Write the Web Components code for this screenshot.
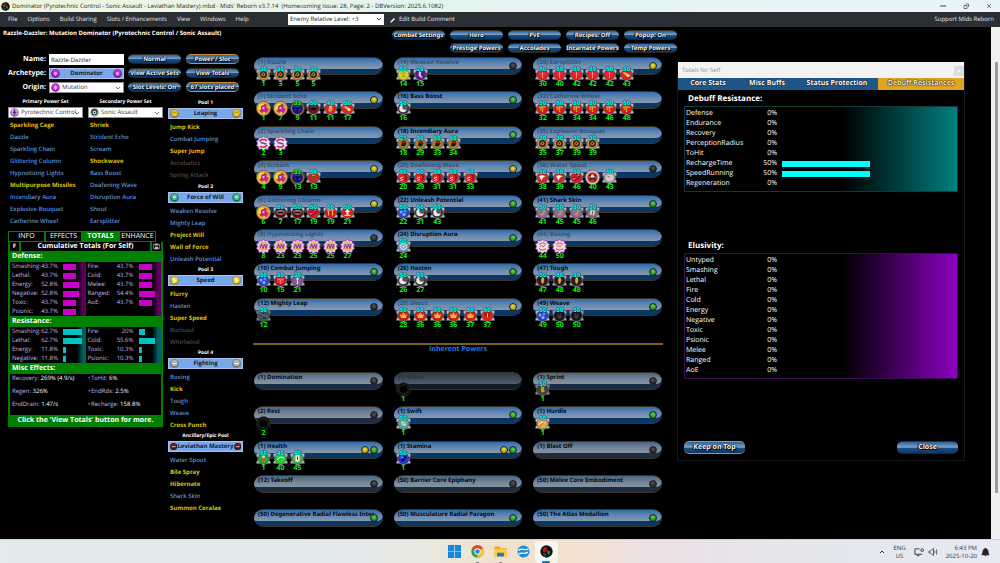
<!DOCTYPE html>
<html lang="en">
<head>
<meta charset="utf-8">
<title>Mids' Reborn</title>
<style>
html,body{margin:0;height:100%;background:#000}
body{font-family:"Open Sans","Noto Sans",sans-serif;font-size:6px;line-height:12px;color:#fff;text-rendering:geometricPrecision}
</style>
</head>
<body>
<mids-app></mids-app>
<script>
const RESET = `*{box-sizing:border-box}
button,input,select{font:inherit;color:inherit;text-rendering:inherit;margin:0;padding:0;border:0;background:none;border-radius:0;text-align:inherit}
ul{list-style:none;margin:0;padding:0}svg{display:block}`;

const define = (name, css, html) => customElements.define(name, class extends HTMLElement {
  connectedCallback() {
    if (this.shadowRoot) return;
    this.attachShadow({ mode: 'open' }).innerHTML = `<style>${RESET}${css}</style>${html(this)}`;
  }
});

/* ---------- enhancement icons ---------- */
const shield = (fill, glyph, rim = '#b8bcc6') => `
  <path d="M1 5h4l3-2h14l3 2h4v6l-2 1v8l2 1v4h-5l-4 1-5 3-5-3-4-1H1v-4l2-1v-8l-2-1z" fill="${rim}" stroke="#4a4c58" stroke-width="1"/>
  <circle cx="15" cy="15" r="11" fill="${fill}" stroke="#3a3238" stroke-width="1"/>${glyph}`;
const ringed = (fill, rim, glyph) => `<circle cx="15" cy="15" r="14.5" fill="${rim}" stroke="#4b3010"/><circle cx="15" cy="15" r="12" fill="none" stroke="#f0dcae" stroke-opacity=".5"/><circle cx="15" cy="15" r="10.5" fill="${fill}"/>${glyph}`;
const wavy = (fill, glyph) => `<path d="M15 1l4 3 5-1 1 5 4 3-2 4 2 4-4 3-1 5-5-1-4 3-4-3-5 1-1-5-4-3 2-4-2-4 4-3 1-5 5 1z" fill="#e9d9f2" stroke="#9a2fb0" stroke-width="1.5"/><circle cx="15" cy="15" r="10" fill="${fill}"/>${glyph}`;
const ICONS = {
  eye: shield('#c9913c', '<circle cx="15" cy="15" r="7" fill="#2c2415"/><path d="M12 18c-1-5 3-8 5-5s-1 6-3 4" fill="none" stroke="#d9b058" stroke-width="2"/>'),
  duo: ringed('#f0e62c', '#c99a4c', '<path d="M15 5a10 10 0 0 1 9 6l-6 1z" fill="#e23a2a"/><path d="M18 12l7 2a10 10 0 0 1-7 11z" fill="#e01fa0"/><path d="M6 18l6-1 2 8a10 10 0 0 1-8-7z" fill="#e23a2a"/><ellipse cx="15" cy="15" rx="4.5" ry="6.5" fill="#d52bb4" stroke="#6b2a62" stroke-width="1.5"/><circle cx="15" cy="14" r="2" fill="#f3b6e8"/>'),
  navy: ringed('#10127c', '#6b5334', '<path d="M9 10h4l2 3 3-3h3M10 19l3-3h5l2 4" fill="none" stroke="#3f50d8" stroke-width="2"/><circle cx="15" cy="15" r="3" fill="#04052c"/>'),
  maroon: shield('#6a1424', '<path d="M8 14c4-4 10-4 14 0-3 6-11 6-14 0z" fill="#180409"/><path d="M9 13c4-2 8-2 12 0" stroke="#d07a86" fill="none"/>'),
  flame: shield('#e0221c', '<path d="M11 21c-1-6 1-9 5-12 2 4 4 3 3 8l-3 4z" fill="#d9a441"/><path d="M12 12l6-2" stroke="#f5dca4" stroke-width="2"/>'),
  comet: shield('#e02418', '<path d="M7 9l8 3 7 6-5 1-6-4z" fill="#e8b25a"/><circle cx="18" cy="17" r="3" fill="#f4e3c0"/>'),
  swirl: wavy('#f4e6ee', '<path d="M7 11c4-5 11-5 15-1M22 18c-3 5-10 6-14 2" stroke="#d2202c" stroke-width="3" fill="none"/><path d="M9 14c5-2 7 3 12 1" stroke="#3b58c8" stroke-width="3" fill="none"/>'),
  fist: shield('#d82020', '<path d="M12 21v-6l-2-3 3-4 5 1 2 5-3 7z" fill="#8a3f22"/><path d="M12 10l5 1" stroke="#e8b98c" stroke-width="2"/>'),
  lips: shield('#4a1016', '<path d="M6 14c4-6 14-6 18 0-4 8-14 8-18 0z" fill="#c0656c"/><path d="M9 15h12" stroke="#1a0306" stroke-width="3"/>'),
  slash: shield('#d41a22', '<path d="M8 19L21 10" stroke="#f2b4ae" stroke-width="2"/><path d="M8 16l14-4M9 21l12-5" stroke="#7c0a10" stroke-width="2"/>'),
  bars: shield('#e01c12', '<path d="M8 10h14" stroke="#f4e0c8" stroke-width="2"/><path d="M11 12v9M19 12v9" stroke="#f2b078" stroke-width="2"/>'),
  up: shield('#e02512', '<path d="M15 7l5 7h-3v7h-4v-7h-3z" fill="#f8eee0"/><path d="M9 21h12" stroke="#f4d8b8" stroke-width="2"/>'),
  weave: wavy('#e2b478', '<path d="M8 19l3-9 3 9 3-9 3 9 2-9" fill="none" stroke="#8a2f9c" stroke-width="2"/>'),
  dots: shield('#2446c8', '<circle cx="10" cy="14" r="3" fill="#7fa4ff"/><circle cx="18" cy="12" r="3" fill="#5f86f4"/><circle cx="16" cy="19" r="3" fill="#8fb0ff"/>'),
  cube: shield('#b9101c', '<path d="M8 11l7-3 7 3v8l-7 3-7-3z" fill="#f03034"/><path d="M8 11l7 3 7-3M15 14v8" stroke="#ffb0b0" fill="none"/>'),
  man: shield('#7f5a96', '<path d="M15 7v14M12 12h6M13 21h4" stroke="#e9d8c0" stroke-width="2"/>', '#b6a6bc'),
  steel: shield('#45545c', '<path d="M10 10h10v11H10z" fill="#1f2c30"/><path d="M9 11l12 7M10 20l10-9" stroke="#8fa6a8" stroke-width="1.5"/>', '#6d7b80'),
  gold: shield('#d8d22a', '<path d="M15 8v14M9 12h12M10 18h10" stroke="#a49c14" stroke-width="1.5"/>'),
  plum: shield('#5a1f82', '<path d="M12 8l4 2v7l4 4h-5l-4-4z" fill="#e8b8d8"/>'),
  moon: shield('#303036', '<circle cx="14" cy="15" r="7.5" fill="#e8e8e4"/><circle cx="18" cy="12" r="5.5" fill="#55555c"/>'),
  ember: shield('#9c8228', '<path d="M10 20l2-9 6-2 3 6-4 6z" fill="#201018"/><path d="M11 11l8 3" stroke="#9a301c" stroke-width="3"/>'),
  wave: shield('#e02428', '<path d="M16 8c5 2 6 8 2 13" fill="none" stroke="#8c0c12" stroke-width="3"/><path d="M8 17l6-3M9 21l5-2" stroke="#ffe8e0" stroke-width="2"/>'),
  spiral: shield('#7f9cc0', '<circle cx="15" cy="15" r="6" fill="none" stroke="#e8f2fb" stroke-width="2"/><circle cx="15" cy="15" r="2" fill="#dce8f4"/>'),
  crown: shield('#d31a18', '<path d="M8 12l4 2 3-6 3 6 4-2-2 8H10z" fill="#e6b83c"/>'),
  heart: shield('#e82018', '<path d="M15 10c3-3 7 0 5 5l-5 7-5-7c-2-5 2-8 5-5z" fill="#b01410"/><path d="M15 11v8" stroke="#f4d8c8" stroke-width="2"/>'),
  bolt: shield('#e42022', '<path d="M15 9v13" stroke="#ffb0aa" stroke-width="1.5"/><path d="M10 14h10" stroke="#f07470"/>'),
  tee: shield('#dc1a10', '<path d="M8 12h14M15 9v13M11 14v4" stroke="#c79a32" stroke-width="3"/>'),
  spout: shield('#d42a24', '<path d="M8 12l7-2 6 3-5 2-3 6z" fill="#f7f3ee"/><path d="M17 10l4 3" stroke="#5aa35f" stroke-width="2"/>'),
  orb: ringed('#b8322e', '#d4c4c0', '<circle cx="15" cy="13" r="4" fill="#e8e6e4"/><path d="M9 20c3-5 9-5 12 0M9 10l3 2M21 10l-3 2" stroke="#1c1618" stroke-width="2.5" fill="none"/>'),
  pearl: shield('#b8a8a8', '<circle cx="15" cy="15" r="7" fill="#dccbc6"/><path d="M11 12l5 3" stroke="#b0605a" stroke-width="2"/>'),
  skin: shield('#8e6f93', '<path d="M11 20l6-11 4 2-5 10z" fill="#d09858"/><path d="M13 17l5-6" stroke="#5a3a40"/>', '#b9aac4'),
  rock: shield('#77747a', '<path d="M9 19l3-10 8 2-2 10z" fill="#d8d6ce"/><path d="M16 11l-2 9" stroke="#555" stroke-width="2"/>', '#b9a2c4'),
  box: wavy('#f0dcd8', '<path d="M8 11c5-4 9-4 14 0M8 19c5 4 9 4 14 0" stroke="#e0323c" stroke-width="2" fill="none"/><path d="M10 16l3-4 3 4 4-4" stroke="#9a8890" stroke-width="2" fill="none"/>'),
  tough: shield('#2a1d18', '<path d="M15 7c5 4 4 11 0 15-4-4-3-11 0-15z" fill="#d2ad52"/>', '#b0a0bc'),
  coal: shield('#17151b', '<path d="M11 10l4 4 4-4v9l-4 3-4-3z" fill="#3c3842"/>', '#a098ac'),
  boot: shield('#3d4436', '<path d="M12 8l6 2 1 10-7 1z" fill="#b89c30"/>', '#7c8690'),
  jade: shield('#5fa396', '<path d="M10 10l9 2 1 8-8-1z" fill="#b4dcd2"/><path d="M12 17l6-4" stroke="#4a8478"/>'),
  sand: shield('#dca850', '<path d="M8 17l6-5 7 2" stroke="#fff0cc" stroke-width="2" fill="none"/><path d="M9 20l10-8" stroke="#7a5018"/>'),
  leaf: shield('#1fae2a', '<path d="M11 22V11l8 0v11" fill="#a46a3a"/><circle cx="15" cy="11" r="3" fill="#eed0a8"/>'),
  lime: shield('#24d42c', '<path d="M8 18l6-6 8 2" stroke="#eafff0" stroke-width="2" fill="none"/>'),
  pill: shield('#4fae4a', '<path d="M11 8h8v13h-8z" fill="#f4f6ee"/><path d="M15 11v7" stroke="#2b4a28" stroke-width="2"/>'),
  azure: shield('#2636e0', '<path d="M9 19l9-10 4 3-8 10z" fill="#0c0f4a"/><path d="M10 12l5 2" stroke="#a8b8ff" stroke-width="2"/>'),
  empty: '<circle cx="15" cy="15" r="13.5" fill="#000" stroke="#303030" stroke-width="2"/><circle cx="15" cy="15" r="9.5" fill="#000" stroke="#484848" stroke-width="1.5"/>'
};
const svg = (inner, w, h = w, vb = '0 0 30 30') => `<svg width="${w}" height="${h}" viewBox="${vb}" aria-hidden="true">${inner}</svg>`;

/* ---------- glossy blue button ---------- */
define('gloss-button', `
:host{display:block;font-family:"Noto Sans",sans-serif}
button{display:flex;align-items:center;justify-content:center;width:100%;height:var(--h,10px);border-radius:5px;
 background:linear-gradient(#2a5f98,#5585b4 25%,#7ba3ca 48%,#1c4f86 56%,#0d3763);border-top:1px solid #33301f;border-bottom:1px solid #2b2517;
 font-weight:700;line-height:8px;white-space:nowrap;text-shadow:0 0 1px #000,1px 1px 1px #000,-1px 0 1px #000;color:#f2f2f2}
:host([lit]) button{border-color:#d08d26}`,
  () => `<button type="button"><slot></slot></button>`);

/* ---------- drop-down with an icon ---------- */
const orb = (c, d, g = '') => `<svg width="9" height="9" viewBox="0 0 18 18" aria-hidden="true"><circle cx="9" cy="9" r="8.5" fill="${d}"/><circle cx="9" cy="8" r="6.5" fill="${c}"/>${g}</svg>`;
const ORBS = {
  mutation: orb('#d838e0', '#7a1590', '<path d="M6 11l3-6 3 6M9 8v6" stroke="#ffd8ff" stroke-width="1.5" fill="none"/>'),
  dominator: orb('#c42fd6', '#6a1284', '<path d="M7 6h4l1 3-3 5-3-5z" fill="#f0a8ff"/>'),
  pyro: orb('#e0a8e8', '#8458a4', '<path d="M9 3v11M5 9h8" stroke="#5e2a88" stroke-width="3"/>'),
  sonic: orb('#2f4c44', '#9cb0a8', '<circle cx="9" cy="9" r="3.5" fill="#dfe8e2"/><circle cx="9" cy="9" r="1.5" fill="#111"/>'),
  leap: orb('#e6c93a', '#94700e', '<path d="M5 9c2-4 6-4 8 0" stroke="#7c5c06" stroke-width="1.5" fill="none"/>'),
  will: orb('#46b394', '#136650', '<circle cx="9" cy="8" r="3" fill="#a5ecd6"/>'),
  speed: orb('#ecd040', '#a8820f', '<path d="M6 5l5 4-5 4" stroke="#fff8c4" stroke-width="2.5" fill="none"/>'),
  fight: orb('#b4b4b0', '#6c6a66', '<path d="M5 9h8" stroke="#f2f0e8" stroke-width="2"/>'),
  levi: orb('#8c2020', '#200606', '<path d="M5 9h8" stroke="#f0c8c0" stroke-width="2"/><path d="M6 6h6" stroke="#300" stroke-width="2"/>')
};
define('icon-select', `
:host{display:grid;grid-template-columns:subgrid;grid-column:1/-1;align-items:center}
:host([stacked]){display:block;grid-column:auto}
label{font-weight:700;text-align:right;font-size:7px;line-height:10px}
:host([stacked]) label{display:block;text-align:center;font-size:5px;line-height:9px}
.box{position:relative;background:#fff;border:1px solid #8d8d8d;color:#3a3a3a;height:11px}
.box>svg{position:absolute;top:0;pointer-events:none}
.box>svg:first-child{left:1px}.box>svg:last-child{right:2px;top:3px}
select{appearance:none;display:block;width:100%;height:9px;padding-left:12px;font-size:6px;line-height:9px}`,
  e => `<label for="s">${e.getAttribute('label')}</label><div class="box">${ORBS[e.getAttribute('icon')]}<select id="s"><option>${e.getAttribute('value')}</option></select>${svg('<path d="M1 1l2 2 2-2" fill="none" stroke="#777" stroke-width="1"/>', 6, 4, '0 0 6 4')}</div>`);

/* ---------- list of powers ---------- */
define('power-list', `
:host{display:block}
button{display:block;width:100%;height:12px;line-height:12px;font-size:6px;font-weight:600;color:#6190cf;white-space:nowrap;padding-left:2px}
.y{color:#dcc010;font-weight:700}.g{color:#4b4b4b}`,
  e => `<ul>${e.getAttribute('items').split('|').map(t => {
    const k = t[0] === '*' ? 'y' : t[0] === '-' ? 'g' : '';
    return `<li><button type="button" class="${k}">${k ? t.slice(1) : t}</button></li>`;
  }).join('')}</ul>`);

define('blue-bar', `
:host{display:block}
button{display:flex;align-items:center;justify-content:space-between;width:100%;height:11px;padding:0 1px;background:#79a7ec;border:1px solid #a8c4ee;color:#0d1a33;font-weight:700;font-size:6px;line-height:9px;white-space:nowrap}`,
  e => `<button type="button">${ORBS[e.getAttribute('icon')]}<slot></slot>${ORBS[e.getAttribute('icon')]}</button>`);

define('pool-block', `
:host{display:block}
h3{margin:0;font-size:5px;line-height:10px;font-weight:700;text-align:center}
power-list{margin-top:2px}`,
  e => `<h3>${e.getAttribute('title-text')}</h3><blue-bar icon="${e.getAttribute('icon')}">${e.getAttribute('name')}</blue-bar><power-list items="${e.getAttribute('items')}"></power-list>`);

/* ---------- totals card ---------- */
define('stat-table', `
:host{display:grid;grid-template-columns:1fr 1fr;background:#000}
.col{background:linear-gradient(90deg,transparent 88%,var(--deep) 96%,var(--deep))}
table{width:100%;border-spacing:0;table-layout:fixed}
th,td{padding:0;height:9px;line-height:9px;font-size:6px;font-weight:400;white-space:nowrap;color:#c3b8e6}
th{text-align:left;padding-left:2px;width:30px}td{text-align:right;width:18px}td+td{width:auto;padding-left:5px}
i{display:block;height:6px;background:var(--bar)}`,
  e => e.getAttribute('rows').split('||').map(c => `<div class="col"><table>${c.split('|').map(r => {
    const [n, v, w] = r.split(',');
    return `<tr><th>${n}</th><td>${v}</td><td><i style="width:${w}px"></i></td></tr>`;
  }).join('')}</table></div>`).join(''));

define('totals-card', `
:host{display:block}
nav{display:grid;grid-template-columns:repeat(4,37px)}
nav button{height:11px;border:1px solid #008000;text-align:center;font-size:7px;line-height:9px}
nav .on{background:#008000;font-weight:700}
.card{background:#008000;padding:0 2px 1px}
.head{display:grid;grid-template-columns:9px 1fr 9px;gap:2px;height:9px}
.head *{background:#000;text-align:center;font-size:7px;line-height:9px;font-weight:700}
.head h2{margin:0}.head button{display:grid;place-items:center;font-size:6px;background:#000}
h3{margin:0;font-size:7px;line-height:11px;height:11px;font-weight:700;padding-left:2px}
stat-table.def{--bar:#c800c8;--deep:#5c005c}stat-table.res{--bar:#00c4c4;--deep:#006060}
.misc{background:#000;display:grid;grid-template-columns:1fr 1fr;grid-auto-rows:13px;height:41px;font-size:6px;line-height:8px;color:#c3b8e6}
.misc span{padding-left:2px;white-space:nowrap}b{font-weight:400;color:#fff}
p{margin:0;text-align:center;font-size:7px;line-height:11px;font-weight:700;white-space:nowrap}`,
  () => `<nav><button type="button">INFO</button><button type="button">EFFECTS</button><button type="button" class="on">TOTALS</button><button type="button">ENHANCE</button></nav>
<div class="card"><div class="head"><button type="button">F</button><h2>Cumulative Totals (For Self)</h2><button type="button" aria-label="Save">${svg('<path d="M1 1h8v7H1z" fill="none" stroke="#ccc"/><path d="M3 1h4v2H3zM3 5h4v3H3z" fill="#ccc"/>', 7, 7, '0 0 10 9')}</button></div>
<h3>Defense:</h3><stat-table class="def" rows="Smashing:,43.7%,13|Lethal:,43.7%,13|Energy:,52.8%,16|Negative:,52.8%,16|Toxic:,43.7%,13|Psionic:,43.7%,13||Fire:,43.7%,13|Cold:,43.7%,13|Melee:,43.7%,13|Ranged:,54.4%,16|AoE:,43.7%,13"></stat-table>
<h3>Resistance:</h3><stat-table class="res" rows="Smashing:,62.7%,19|Lethal:,62.7%,19|Energy:,11.8%,3|Negative:,11.8%,3||Fire:,20%,6|Cold:,55.6%,16|Toxic:,10.3%,3|Psionic:,10.3%,3"></stat-table>
<h3>Misc Effects:</h3><div class="misc"><span>Recovery: <b>269% (4.9/s)</b></span><span>+ToHit: <b>6%</b></span><span>Regen: <b>326%</b></span><span>+EndRdx: <b>2.5%</b></span><span>EndDrain: <b>1.47/s</b></span><span>+Recharge: <b>158.8%</b></span></div>
<p>Click the 'View Totals' button for more.</p></div>`);

/* ---------- one power with its slots ---------- */
define('power-bar', `
:host{display:block;min-width:0;font-family:"Noto Sans",sans-serif}
.bar{position:relative;height:18px;border-radius:9px;background:#0b3765;border-top:1px solid #3c3320;border-bottom:1px solid #3c3320;overflow:hidden}
.name{display:block;width:100%;height:11px;padding:0 0 3px 4px;border-radius:8px 8px 9px 3px;background:linear-gradient(#2f6cad,#6086b0 45%,#8799b1);color:#05080f;font-weight:700;font-size:6px;line-height:8px;white-space:nowrap;overflow:hidden}
.dim .name{color:#3c516b}
.off{background:#1b2d42}.off .name{background:linear-gradient(#4a6680,#73859a 55%,#8a939e)}
.faint{background:#101c28}.faint .name{background:linear-gradient(#2c3a48,#525c67);color:#2a323b}
.leds{position:absolute;right:5px;top:4px;display:flex;gap:1px}
.leds i{width:8px;height:8px;border-radius:50%;border:1px solid #222;background:radial-gradient(circle at 50% 35%,var(--a),var(--b))}
.G{--a:#52e04c;--b:#0d5c14}.Y{--a:#e8e23a;--b:#8a8210}.K{--a:#555;--b:#0c0c0c}
.slots{position:relative;display:grid;grid-auto-flow:column;grid-auto-columns:17px 17px 16px;margin:-8px 0 -4px 2px;justify-content:start}
.slot{position:relative;width:15px;text-align:center;font-weight:700;font-size:7px;line-height:8px;color:#0cf00c}
.slot b{position:absolute;left:0;right:0;top:-1px;color:#00f0f4;font-size:6px;line-height:7px;text-shadow:0 0 1px #023,0 0 1px #023}
.slot b.g{color:#12f012}
.slot span{display:block;margin-top:-1px}`,
  e => {
    const st = e.getAttribute('state') || '';
    const slots = (e.getAttribute('slots') || '').split(' ').filter(Boolean).map(s => {
      const [ic, lv, at] = s.split(',');
      return `<div class="slot">${svg(ICONS[ic], 15)}${lv ? `<b class="${lv === '33' ? 'g' : ''}">${lv}</b>` : ''}<span>${at}</span></div>`;
    }).join('');
    const leds = (e.getAttribute('leds') || '').split('').map(c => `<i class="${c}"></i>`).join('');
    return `<div class="bar ${st}"><button type="button" class="name">${e.getAttribute('name')}</button><div class="leds">${leds}</div></div><div class="slots">${slots}</div>`;
  });

const rep = (ic, lv, ats) => ats.split(' ').map(a => `${ic},${lv},${a}`).join(' ');
/* name, state, lights, slots; listed row by row */
const PICKED = [
  ['(1) Dazzle', 'dim', '', rep('eye', 30, '1 3 5 5')],
  ['(14) Weaken Resolve', 'dim', 'K', 'gold,50,14 plum,20,15'],
  ['(30) Earsplitter', 'dim', 'Y', rep('bolt', 50, '30 40 42 42 42') + ' comet,50,43'],
  ['(1) Strident Echo', 'dim', 'Y', 'duo,,1 duo,,7 navy,33,9 maroon,50,11 flame,40,11 comet,50,17'],
  ['(16) Bass Boost', '', 'G', 'moon,50,16'],
  ['(32) Catherine Wheel', 'dim', '', rep('tee', 50, '32 33 34 34 46 48')],
  ['(2) Sparkling Chain', 'dim', '', rep('swirl', '', '2 3')],
  ['(18) Incendiary Aura', '', 'G', 'ember,21,18 ' + rep('ember', 50, '29 33 34')],
  ['(35) Explosive Bouquet', 'dim', '', rep('eye', 30, '35 37 39 39')],
  ['(4) Scream', 'dim', 'Y', 'duo,,4 duo,,9 navy,33,13 fist,50,13'],
  ['(20) Deafening Wave', 'dim', 'Y', rep('wave', 50, '20 29 31 31 33')],
  ['(38) Water Spout', 'dim', 'K', 'spout,50,38 spout,50,39 slash,50,46 orb,,40 pearl,50,43'],
  ['(6) Glittering Column', 'dim', 'Y', 'duo,,6 lips,50,7 lips,50,17 slash,50,19 bars,50,19 up,50,21'],
  ['(22) Unleash Potential', '', 'G', 'dots,50,22 moon,50,31 moon,50,43'],
  ['(41) Shark Skin', '', 'G', rep('skin', 50, '41 45 45') + ' rock,30,46'],
  ['(8) Hypnotizing Lights', 'dim', 'K', rep('weave', '', '8 23 23 25 25 27')],
  ['(24) Disruption Aura', '', 'G', 'spiral,50,24'],
  ['(44) Boxing', 'dim', '', rep('box', '', '44 50')],
  ['(10) Combat Jumping', '', 'G', 'dots,50,10 cube,30,15 man,30,21'],
  ['(26) Hasten', '', 'G', rep('moon', 50, '26 27')],
  ['(47) Tough', '', 'G', rep('tough', 50, '47 48 48')],
  ['(12) Mighty Leap', '', 'K', 'steel,50,12'],
  ['(28) Shout', 'dim', 'Y', rep('crown', 50, '28 36 36 36 37') + ' heart,50,37'],
  ['(49) Weave', '', 'G', 'dots,50,49 ' + rep('coal', 50, '50 50')]
];
const INHERENT = [
  ['(1) Domination', 'off', 'K', ''], ['(1) Brawl', 'faint', '', 'empty,,1'], ['(1) Sprint', 'off', 'K', 'boot,50,1'],
  ['(2) Rest', 'off', 'K', 'empty,,2'], ['(1) Swift', '', 'G', 'jade,50,1'], ['(1) Hurdle', '', 'G', 'sand,50,1'],
  ['(1) Health', '', 'YG', 'leaf,50,1 lime,40,40 pill,40,45'], ['(1) Stamina', '', 'YG', 'azure,50,1'], ['(1) Blast Off', 'off', 'K', ''],
  ['(12) Takeoff', 'off', 'K', ''], ['(50) Barrier Core Epiphany', 'off', 'K', ''], ['(50) Melee Core Embodiment', 'off', 'K', ''],
  ['(50) Degenerative Radial Flawless Inter', '', 'G', ''], ['(50) Musculature Radial Paragon', '', 'G', ''], ['(50) The Atlas Medallion', '', 'G', '']
];
const bars = list => list.map(([n, s, l, sl]) => `<power-bar name="${n}" state="${s}" leds="${l}" slots="${sl}"></power-bar>`).join('');

define('build-board', `
:host{display:block}
.grid{display:grid;grid-template-columns:repeat(3,minmax(0,1fr));column-gap:11px;margin:0 1px;grid-auto-rows:34px 35px 34px 35px 34px 34px 35px}
.inh{grid-auto-rows:34px 35px 34px 34px 30px}
hr{border:0;height:2px;margin:11px 0 0;background:#7d5c14}
h2{margin:0 0 17px;text-align:center;color:#1c7ee0;font-size:7px;line-height:10px;font-weight:700}`,
  () => `<div class="grid">${bars(PICKED)}</div><hr><h2>Inherent Powers</h2><div class="grid inh">${bars(INHERENT)}</div>`);

/* ---------- floating totals window ---------- */
define('resist-table', `
:host{display:block;border:1px solid var(--edge);background:linear-gradient(90deg,#000 58%,var(--glow));padding:2px 0}
table{border-spacing:0;width:100%;table-layout:fixed}
th,td{padding:0;height:10px;font-size:7px;line-height:10px;font-weight:400;text-align:left;white-space:nowrap}
th{width:62px;padding-left:1px}td{width:30px;text-align:right}td+td{width:auto;padding-left:5px}
i{display:block;width:50%;height:6px;background:#00ffff}`,
  e => `<table>${e.getAttribute('rows').split('|').map(r => { const [n, v] = r.split(','); return `<tr><th>${n}</th><td>${v}</td><td>${v === '50%' ? '<i></i>' : ''}</td></tr>`; }).join('')}</table>`);

define('totals-window', `
:host{display:flex;flex-direction:column;border:1px solid #161616;border-top:0;background:#000}
header{display:flex;justify-content:space-between;background:#f3f3f3;color:#8f8f8f;height:16px;line-height:16px;padding-left:4px}
header button{width:10px;height:10px;margin-top:4px;background:#dcdcdc;color:#fff;text-align:center;line-height:9px}
nav{display:grid;grid-template-columns:60fr 58fr 82fr 86fr;height:12px;background:#1f5688}
nav button{text-align:center;font-size:7px;line-height:12px;font-weight:700;color:#fff;text-shadow:0 0 1px #000,0 0 1px #000;white-space:nowrap}
nav .on{background:#dea521;color:#f4ecd4;text-shadow:0 0 2px #000,0 0 1px #000}
h2{margin:0;font-size:8px;line-height:12px;font-weight:700;padding-left:10px}
h2:first-of-type{margin-top:3px}h2+resist-table{margin:1px 6px 0}
.a{--edge:#0d3b3b;--glow:#008080}.b{--edge:#3a0c4a;--glow:#8c00c0}
h2:nth-of-type(2){margin-top:48px}
footer{display:flex;justify-content:space-between;padding:0 6px;margin-top:62px;margin-bottom:6px}
gloss-button{width:61px;--h:13px;font-size:7px}`,
  () => `<header><span>Totals for Self</span><button type="button" aria-label="Close window">×</button></header>
<nav><button type="button">Core Stats</button><button type="button">Misc Buffs</button><button type="button">Status Protection</button><button type="button" class="on">Debuff Resistances</button></nav>
<h2>Debuff Resistance:</h2><resist-table class="a" rows="Defense,0%|Endurance,0%|Recovery,0%|PerceptionRadius,0%|ToHit,0%|RechargeTime,50%|SpeedRunning,50%|Regeneration,0%"></resist-table>
<h2>Elusivity:</h2><resist-table class="b" rows="Untyped,0%|Smashing,0%|Lethal,0%|Fire,0%|Cold,0%|Energy,0%|Negative,0%|Toxic,0%|Psionic,0%|Melee,0%|Ranged,0%|AoE,0%"></resist-table>
<footer><gloss-button lit>Keep on Top</gloss-button><gloss-button>Close</gloss-button></footer>`);

/* ---------- window chrome ---------- */
const LOGO = '<circle cx="10" cy="10" r="9.5" fill="#111"/><path d="M4 9a6 6 0 0 1 6-6l1 5-4 4z" fill="#c01818"/><path d="M4 12l5 1 1 5a7 7 0 0 1-6-6z" fill="#1548a8"/><path d="M11 8l5 2-2 6-3-4z" fill="#168a38"/>';
define('title-bar', `
:host{display:flex;align-items:center;height:12px;padding:0 0 0 1px;background:linear-gradient(90deg,#eef6dc,#e6f4ee 40%,#e8f3fb);color:#1d1d1d;line-height:12px;white-space:nowrap}
span{flex:1;margin-left:2px}
div{display:flex}button{width:23px;height:12px;display:grid;place-items:center}`,
  () => `${svg(LOGO, 9, 9, '0 0 20 20')}<span><slot></slot></span><div><button type="button" aria-label="Minimize">${svg('<path d="M0 3h6" stroke="#444"/>', 6, 6, '0 0 6 6')}</button><button type="button" aria-label="Restore">${svg('<path d="M1 2.5h3v3h-3zM2.5 1h3v3" fill="none" stroke="#444" stroke-width=".7"/>', 6, 6, '0 0 6 6')}</button><button type="button" aria-label="Close">${svg('<path d="M1 1l4 4M5 1l-4 4" stroke="#444" stroke-width=".7"/>', 6, 6, '0 0 6 6')}</button></div>`);

define('menu-bar', `
:host{display:flex;align-items:center;height:15px;background:#2b2f34;color:#e4e4e4;padding:0 6px 0 8px;line-height:15px;white-space:nowrap}
button{line-height:15px}
nav{display:flex;gap:10px;flex:0 0 280px}
.lvl{position:relative;flex:0 0 96px;margin-right:6px}
select{appearance:none;display:block;width:100%;height:11px;background:#fff;color:#222;padding-left:2px;line-height:11px}
.lvl svg{position:absolute;right:2px;top:3px;pointer-events:none}
.edit{display:flex;align-items:center;gap:3px;flex:1}`,
  () => `<nav>${['File', 'Options', 'Build Sharing', 'Slots / Enhancements', 'View', 'Windows', 'Help'].map(t => `<button type="button">${t}</button>`).join('')}</nav>
<div class="lvl"><select aria-label="Enemy level"><option>Enemy Relative Level: +3</option></select>${svg('<path d="M1 1l2 2 2-2" fill="none" stroke="#555"/>', 6, 5, '0 0 6 5')}</div>
<button type="button" class="edit">${svg('<path d="M0 6l1-2 3-3 1 1-3 3z" fill="#fff"/>', 6, 6, '0 0 6 6')}Edit Build Comment</button><button type="button">Support Mids Reborn</button>`);

define('task-bar', `
:host{display:grid;grid-template-columns:1fr auto 1fr;align-items:center;height:24px;background:linear-gradient(90deg,#e3ebee,#e4eaec 35%,#e9e9e0 42%,#f0e0cc 50%,#f3e0cc 56%,#ece0e6 66%,#e4e6ec 80%,#e6eaf2);color:#333;border-top:1px solid #d0d4d8}
.apps{display:flex;grid-column:2}
.apps button{width:23px;height:22px;display:grid;place-items:center;position:relative}
.apps .run::after{content:"";position:absolute;bottom:0;width:3px;height:1px;background:#888}
.apps .on{background:#f6f7f4;border-radius:3px}.apps .on::after{width:8px;height:2px;background:#1f74c4;border-radius:1px}
.tray{display:flex;align-items:center;justify-content:flex-end;gap:8px;padding-right:10px;text-align:center;line-height:8px}
.time{text-align:right;margin-right:-4px}.tray svg+svg{margin-left:-4px}`,
  () => `<div class="apps">
<button type="button" aria-label="Start">${svg('<path d="M0 0h9v9H0zM10 0h9v9h-9zM0 10h9v9H0zM10 10h9v9h-9z" fill="#1488dc"/>', 13, 13, '0 0 19 19')}</button>
<button type="button" aria-label="Chrome" class="run">${svg('<circle cx="12" cy="12" r="11.5" fill="#2fa24c"/><path d="M12 12L2 6.2A11.5 11.5 0 0 1 22 6.2z" fill="#e04333"/><path d="M12 12L22 6.2A11.5 11.5 0 0 1 12 23.5z" fill="#f7c52b"/><circle cx="12" cy="12" r="5.8" fill="#fff"/><circle cx="12" cy="12" r="4.3" fill="#3c7ce8"/>', 13, 13, '0 0 24 24')}</button>
<button type="button" aria-label="Files" class="run">${svg('<path d="M1 3h9l2 3h12v16H1z" fill="#e8a50e"/><path d="M1 7h23v15H1z" fill="#fccb4c"/><path d="M6 15h13v7H6z" fill="#1a79c8"/>', 13, 13, '0 0 25 25')}</button>
<button type="button" aria-label="Browser">${svg('<circle cx="12" cy="12" r="11" fill="#1c8ad4"/><path d="M3 10c6-6 12 2 18-3M3 17c6-5 11 2 17-4" stroke="#e9f6ff" stroke-width="2.5" fill="none"/>', 13, 13, '0 0 24 24')}</button>
<button type="button" aria-label="Mids' Reborn" class="run on">${svg(LOGO, 13, 13, '0 0 20 20')}</button></div>
<div class="tray">${svg('<path d="M1 4l2-2 2 2" fill="none" stroke="#333"/>', 6, 6, '0 0 6 6')}<span>ENG<br>US</span>${svg('<path d="M9 7.5H1v-6h5M6 9H3" fill="none" stroke="#333"/><circle cx="9" cy="3" r="1.5" fill="none" stroke="#333"/>', 10, 10, '0 0 11 10')}${svg('<path d="M1 4h2l3-3v8L3 6H1zM7.5 3.5v3M9.5 2v6" fill="none" stroke="#333" stroke-width=".8"/>', 10, 10, '0 0 11 10')}<span class="time">6:43 PM<br>2025-10-20</span>${svg('<path d="M1 8c2-2 0-6 4-7 4 1 2 5 4 7zM4 9h2" fill="#222" stroke="#222"/>', 9, 10, '0 0 10 10')}</div>`);

/* ---------- left side of the planner ---------- */
define('hero-form', `
:host{display:block;padding-left:8px}
.wrap{display:grid;grid-template-columns:116px auto;column-gap:4px;justify-content:start}
.f{display:grid;grid-template-columns:38px 75px;column-gap:3px;row-gap:3px}
.f label,.lab{font-weight:700;text-align:right;font-size:7px;line-height:11px;white-space:nowrap}
input{background:#fff;color:#222;height:11px;padding-left:2px;font-size:6px;width:100%}
.b{display:grid;grid-template-columns:53px 53px;column-gap:5px;row-gap:4px;align-content:start}
.cols{display:grid;grid-template-columns:155px 75px;column-gap:5px;margin-top:5px}
.two{display:grid;grid-template-columns:75px 75px;column-gap:5px;align-content:start}
.two power-list{margin-top:1px;margin-bottom:4px}
pool-block:first-child{margin-bottom:1px}
totals-card{grid-column:1/-1}`,
  () => `<div class="wrap"><div class="f"><label for="n">Name:</label><input id="n" value="Razzle-Dazzler"><span class="lab">Archetype:</span><blue-bar icon="dominator">Dominator</blue-bar><icon-select label="Origin:" icon="mutation" value="Mutation"></icon-select></div>
<div class="b"><gloss-button>Normal</gloss-button><gloss-button lit>Power / Slot</gloss-button><gloss-button>View Active Sets</gloss-button><gloss-button>View Totals</gloss-button><gloss-button>Slot Levels: On</gloss-button><gloss-button lit>67 slots placed</gloss-button></div></div>
<div class="cols"><div class="two">
<icon-select stacked label="Primary Power Set" icon="pyro" value="Pyrotechnic Control"></icon-select>
<icon-select stacked label="Secondary Power Set" icon="sonic" value="Sonic Assault"></icon-select>
<power-list items="*Sparkling Cage|Dazzle|Sparkling Chain|Glittering Column|Hypnotizing Lights|*Multipurpose Missiles|Incendiary Aura|Explosive Bouquet|Catherine Wheel"></power-list>
<power-list items="*Shriek|Strident Echo|Scream|*Shockwave|Bass Boost|Deafening Wave|Disruption Aura|Shout|Earsplitter"></power-list>
<totals-card></totals-card></div>
<div><pool-block title-text="Pool 1" icon="leap" name="Leaping" items="*Jump Kick|Combat Jumping|*Super Jump|-Acrobatics|-Spring Attack"></pool-block>
<pool-block title-text="Pool 2" icon="will" name="Force of Will" items="Weaken Resolve|Mighty Leap|*Project Will|*Wall of Force|Unleash Potential"></pool-block>
<pool-block title-text="Pool 3" icon="speed" name="Speed" items="*Flurry|Hasten|*Super Speed|-Burnout|-Whirlwind"></pool-block>
<pool-block title-text="Pool 4" icon="fight" name="Fighting" items="Boxing|*Kick|Tough|Weave|*Cross Punch"></pool-block>
<pool-block title-text="Ancillary/Epic Pool" icon="levi" name="Leviathan Mastery" items="Water Spout|*Bile Spray|*Hibernate|Shark Skin|*Summon Coralax"></pool-block></div></div>`);

define('mids-app', `
:host{display:flex;flex-direction:column;min-height:100vh}
.mid{display:flex;flex:1;background:#000}
.page{flex:1;min-width:0}
.strip{width:9px;background:#f0f0f0;padding:35px 2px 46px 4px;display:flex}.strip i{flex:1;background:#9a9a9a;border-radius:1px}
.head{display:grid;grid-template-columns:1fr 285px 314px;height:27px}
h1{margin:0;font-size:6px;line-height:13px;font-weight:700;padding-left:3px;white-space:nowrap}
.btns{display:grid;grid-template-columns:repeat(5,53px);column-gap:5px;row-gap:3px;padding-top:3px;align-content:start}
.body{display:grid;grid-template-columns:253px minmax(0,1fr) 288px;align-items:start;padding-right:26px}
build-board{padding-top:3px;margin-right:14px}
totals-window{margin-top:8px}`,
  () => `<title-bar>Dominator (Pyrotechnic Control - Sonic Assault - Leviathan Mastery).mbd - Mids' Reborn v3.7.14 &nbsp;(Homecoming Issue: 28, Page: 2 - DBVersion: 2025.6.1082)</title-bar><menu-bar></menu-bar>
<div class="mid"><div class="page"><div class="head"><h1>Razzle-Dazzler: Mutation Dominator (Pyrotechnic Control / Sonic Assault)</h1>
<div class="btns"><gloss-button>Combat Settings</gloss-button><gloss-button>Hero</gloss-button><gloss-button>PvE</gloss-button><gloss-button>Recipes: Off</gloss-button><gloss-button>Popup: On</gloss-button><span></span><gloss-button>Prestige Powers</gloss-button><gloss-button>Accolades</gloss-button><gloss-button>Incarnate Powers</gloss-button><gloss-button>Temp Powers</gloss-button></div></div>
<div class="body"><hero-form></hero-form><build-board></build-board><totals-window></totals-window></div></div><div class="strip"><i></i></div></div>
<task-bar></task-bar>`);
</script>
</body>
</html>
